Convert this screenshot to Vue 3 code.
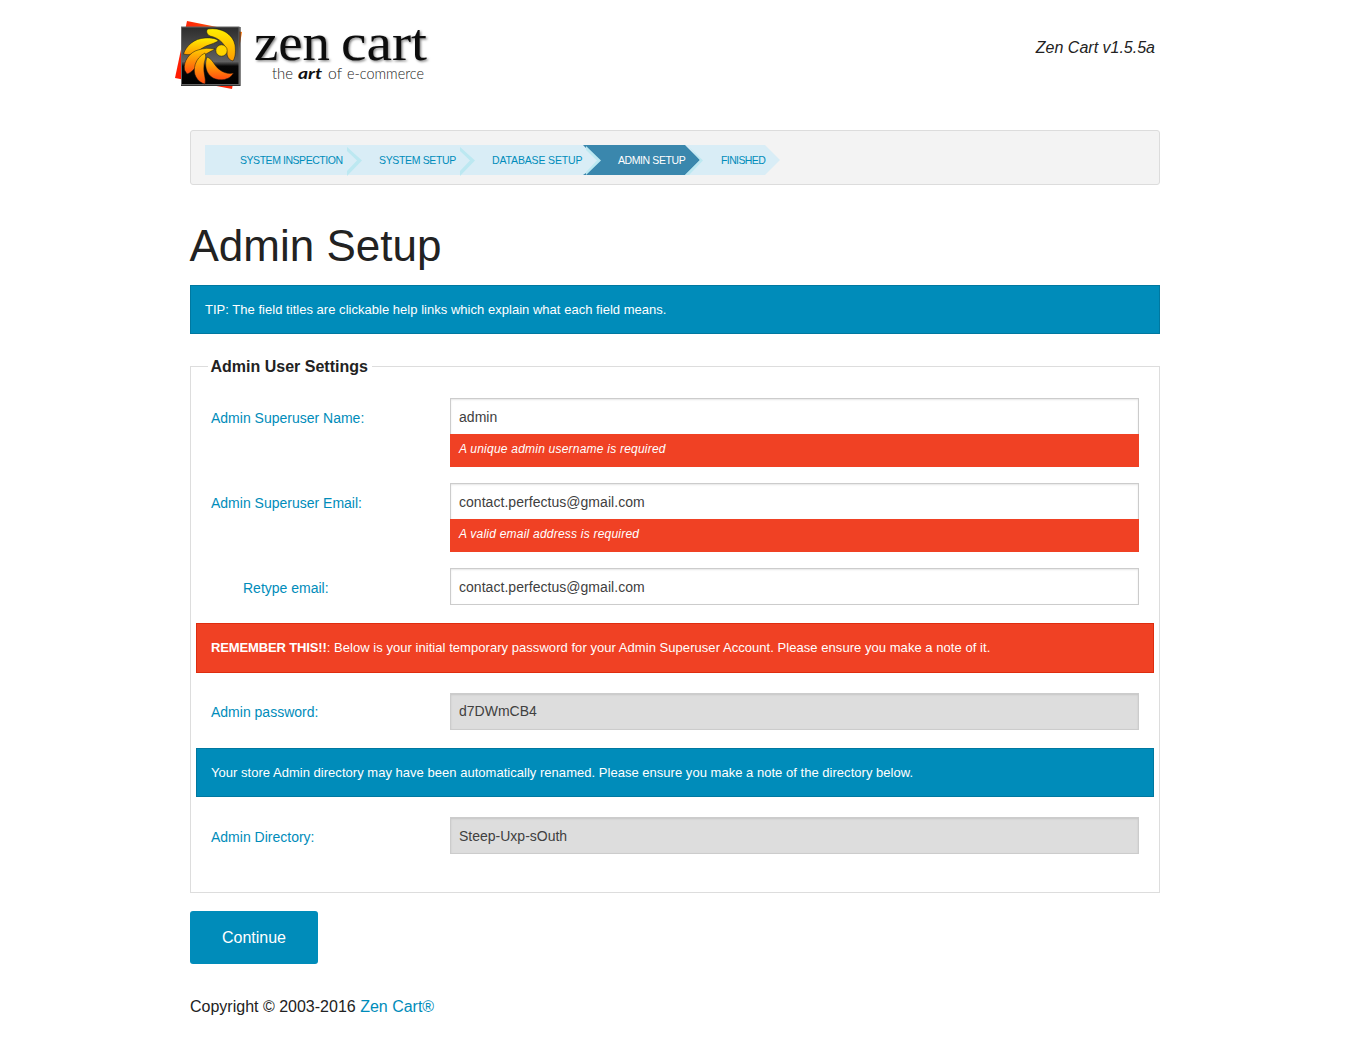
<script setup>
const steps = [
  { label: 'System Inspection', width: 139, spacing: '-0.45px' },
  { label: 'System Setup', width: 113, spacing: '-0.34px' },
  { label: 'Database Setup', width: 126, spacing: '-0.14px' },
  { label: 'Admin Setup', width: 103, spacing: '-0.41px', active: true },
  { label: 'Finished', width: 80, spacing: '-0.6px' },
]
const rows = [
  { type: 'field', label: 'Admin Superuser Name:', value: 'admin', error: 'A unique admin username is required' },
  { type: 'field', label: 'Admin Superuser Email:', value: 'contact.perfectus@gmail.com', error: 'A valid email address is required' },
  { type: 'field', label: 'Retype email:', value: 'contact.perfectus@gmail.com', indent: true },
  { type: 'alert', strong: 'REMEMBER THIS!!', text: ': Below is your initial temporary password for your Admin Superuser Account. Please ensure you make a note of it.' },
  { type: 'field', label: 'Admin password:', value: 'd7DWmCB4', readonly: true, raised: true },
  { type: 'notice', text: 'Your store Admin directory may have been automatically renamed. Please ensure you make a note of the directory below.' },
  { type: 'field', label: 'Admin Directory:', value: 'Steep-Uxp-sOuth', readonly: true },
]
</script>

<template>
  <div class="page">
    <header class="header">
      <svg class="logo" width="264" height="93" viewBox="170 0 264 93">
        <defs>
          <linearGradient id="back" x1="1" y1="0" x2="0" y2="1">
            <stop offset="0" stop-color="#ff8a00" /><stop offset=".4" stop-color="#ff2a08" /><stop offset="1" stop-color="#ff1800" />
          </linearGradient>
          <linearGradient id="tile" x1="0" y1="0" x2="0" y2="1">
            <stop offset="0" stop-color="#2c2c2c" /><stop offset=".6" stop-color="#626262" /><stop offset=".68" stop-color="#080808" /><stop offset="1" stop-color="#000" />
          </linearGradient>
          <linearGradient id="gold" x1="0" y1="0" x2="0" y2="1">
            <stop offset="0" stop-color="#fff000" /><stop offset="1" stop-color="#ff9a00" />
          </linearGradient>
          <linearGradient id="ember" x1="0" y1="0" x2="0" y2="1">
            <stop offset="0" stop-color="#ffd000" /><stop offset="1" stop-color="#ff4a10" />
          </linearGradient>
          <filter id="shade" x="-5%" y="-20%" width="115%" height="150%">
            <feDropShadow dx="1.3" dy="1.3" stdDeviation=".8" flood-color="#000" flood-opacity=".5" />
          </filter>
        </defs>
        <path d="M187 21 L242 32 L232 89 L175 78Z" fill="url(#back)" />
        <rect x="181.500" y="27" width="57.500" height="57.500" fill="url(#tile)" stroke="#666" stroke-width="1" />
        <path d="M181 85.500H240V27" fill="none" stroke="#333" stroke-width="1.200" />
        <g stroke="#111" stroke-width=".5" stroke-linejoin="round">
          <path fill="url(#gold)" d="M208 29 C221 27 233 34 235 45 C236 53 235 58 233 61 C229 60 227 57 227 53 C226 45 220 38 210 36 C206 34 206 30 208 29Z" />
          <path fill="url(#gold)" d="M183.500 54 C186 46 194 38.500 205 38 C211 37.500 217 38.500 218.500 41 C211 45 206 45 201 49 C196 53 190 56 183.500 54Z" />
          <path fill="url(#ember)" d="M184.500 70 C183 61 190 52 198 50 C204 48 209 48 215 49 C208 53 204 54 200.500 60 C197 67 191 73 187 74Z" />
          <path fill="url(#ember)" d="M205 53 C195 58 192 70 196 77 C198 81 202 83.500 205 84 C206.500 79 203 73 204 66 C204 60 207 58 205 53Z" />
          <path fill="url(#ember)" d="M207 57 C213 59 214 66 220 70 C224 73 229 74 233.500 73 C230 80 220 81.500 213 78 C206 74 204 65 207 57Z" />
          <circle fill="#ffd500" cx="221.500" cy="50.500" r="5.700" />
        </g>
        <g filter="url(#shade)" font-family="'Liberation Serif', serif" font-size="53" fill="#111">
          <text x="254" y="60" textLength="76" lengthAdjust="spacingAndGlyphs">zen</text>
          <text x="341" y="60" textLength="86" lengthAdjust="spacingAndGlyphs">cart</text>
        </g>
        <g font-size="16" fill="#222" font-family="Lato, sans-serif" font-weight="300">
          <text x="272" y="79" textLength="21" lengthAdjust="spacingAndGlyphs">the</text>
          <text x="298" y="79" textLength="24" lengthAdjust="spacingAndGlyphs" font-weight="700" font-style="italic" fill="#111">art</text>
          <text x="328" y="79" textLength="14" lengthAdjust="spacingAndGlyphs">of</text>
          <text x="347" y="79" textLength="77" lengthAdjust="spacingAndGlyphs" font-size="15">e-commerce</text>
        </g>
      </svg>
      <em class="version">Zen Cart v1.5.5a</em>
    </header>

    <nav class="steps">
      <svg class="track" width="576" height="32" viewBox="0 0 576 32">
        <path d="M0 0H560L575 15L560 30H0Z" fill="#d9edf6" />
        <path d="M142 2L157 15.500L142 31V26L152 15.500L142 6Z" fill="#bce8f1" />
        <path d="M255 2L270 15.500L255 31V26L265 15.500L255 6Z" fill="#bce8f1" />
        <path d="M378 0H480L495 15L480 30H378L381 28V3Z" fill="#3a87ad" />
        <path d="M379 3L391 15L379 28Z" fill="#d9edf6" />
        <path d="M381 1L396 15.500L381 30V25L391 15.500L381 6Z" fill="#bce8f1" />
        <path d="M381 5L392 15.500L381 27Z" fill="#d9edf6" />
        <path d="M484 2L498 15.500L484 30H480L495 15Z" fill="#bce8f1" />
      </svg>
      <span v-for="s in steps" :key="s.label" class="step" :class="{ active: s.active }"
        :style="{ width: s.width + 'px', letterSpacing: s.spacing }">{{ s.label }}</span>
    </nav>

    <h1>Admin Setup</h1>
    <div class="box tip">TIP: The field titles are clickable help links which explain what each field means.</div>

    <fieldset>
      <legend>Admin User Settings</legend>
      <template v-for="(r, i) in rows" :key="i">
        <div v-if="r.type === 'field'" class="row" :class="{ raised: r.raised }">
          <a class="label" :class="{ indent: r.indent }">{{ r.label }}</a>
          <div class="control">
            <div class="input" :class="{ readonly: r.readonly, invalid: r.error }">{{ r.value }}</div>
            <small v-if="r.error" class="error">{{ r.error }}</small>
          </div>
        </div>
        <div v-else class="box" :class="r.type"><b v-if="r.strong">{{ r.strong }}</b>{{ r.text }}</div>
      </template>
    </fieldset>

    <button class="continue">Continue</button>
    <footer>Copyright © 2003-2016 <a>Zen Cart®</a></footer>
  </div>
</template>

<style>
body { background: #fff; }
</style>

<style scoped>
* { box-sizing: border-box; }
.page {
  width: 970px;
  height: 1040px;
  margin-left: 190px;
  font-family: "Liberation Sans", Arial, sans-serif;
  font-size: 16px;
  color: #222;
}
.header { display: flex; justify-content: space-between; height: 130px; padding-right: 5px; }
.logo { display: block; margin-left: -20px; }
.version { margin-top: 36px; line-height: 24px; }
.steps {
  position: relative;
  display: flex;
  height: 55px;
  padding: 14px;
  background: #f3f3f3;
  border: 1px solid #dcdcdc;
  border-radius: 3px;
}
.track { position: absolute; left: 14px; top: 14px; }
.step {
  position: relative;
  flex: none;
  padding-left: 35px;
  font-size: 10.5px;
  line-height: 31px;
  height: 30px;
  text-transform: uppercase;
  white-space: nowrap;
  color: #008cba;
}
.step.active { color: #fff; }
h1 { margin: 31px 0 9px -0.5px; font-size: 44px; line-height: 60px; font-weight: 400; }
.box {
  height: 49px;
  padding: 0 14px;
  border: 1px solid #0078a0;
  background: #008cba;
  color: #fff;
  font-size: 13px;
  letter-spacing: .026px;
  line-height: 47px;
  white-space: nowrap;
}
fieldset {
  height: 537px;
  margin: 22px 0 0;
  padding: 22px 5px 0;
  border: 1px solid #ddd;
}
legend { margin-left: 12px; padding: 0 4px 0 2.500px; font-weight: 700; line-height: 22px; height: 20px; }
.row { display: flex; padding: 0 15px; margin-bottom: 16px; }
.label { width: 239px; padding-top: 10px; font-size: 14px; line-height: 20px; color: #008cba; }
.label.indent { padding-left: 32px; }
.control { flex: 1; }
.input {
  height: 37px;
  padding: 0 8px;
  border: 1px solid #ccc;
  box-shadow: inset 0 1px 2px rgba(0, 0, 0, .1);
  font-size: 14px;
  letter-spacing: .04px;
  line-height: 36px;
  color: #404040;
}
.input.invalid { height: 36px; border-bottom: 0; }
.input.readonly { background: #ddd; letter-spacing: 0; }
.raised .label { padding-top: 9px; }
.raised .input { line-height: 34px; }
.error {
  display: block;
  height: 33px;
  padding: 0 9px;
  background: #f04124;
  color: #fff;
  font-size: 12px;
  font-style: italic;
  letter-spacing: .22px;
  line-height: 30px;
}
fieldset .box { margin: 18px 0 20px; }
.alert { height: 50px; background: #f04124; border-color: #de2d0f; letter-spacing: .048px; }
.alert b { letter-spacing: -.14px; }
.continue {
  display: block;
  width: 128px;
  height: 53px;
  margin-top: 18px;
  border: 0;
  border-radius: 3px;
  background: #008cba;
  color: #fff;
  font: inherit;
}
footer { margin-top: 31px; line-height: 24px; }
footer a { color: #008cba; }
</style>
